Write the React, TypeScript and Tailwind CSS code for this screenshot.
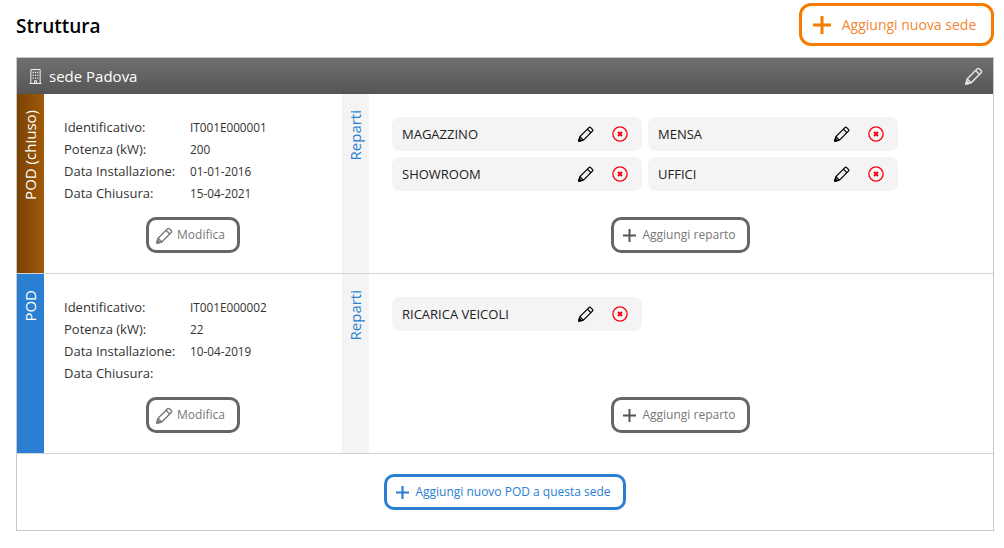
type PodInfo = {
  label: string
  stripClass: string
  id: string
  power: string
  installed: string
  closed: string
  departments: string[]
}

const pods: PodInfo[] = [
  {
    label: 'POD (chiuso)',
    stripClass: 'bg-gradient-to-r from-[#7a4203] to-[#a05a0c]',
    id: 'IT001E000001',
    power: '200',
    installed: '01-01-2016',
    closed: '15-04-2021',
    departments: ['MAGAZZINO', 'MENSA', 'SHOWROOM', 'UFFICI'],
  },
  {
    label: 'POD',
    stripClass: 'bg-[#2a7fd2]',
    id: 'IT001E000002',
    power: '22',
    installed: '10-04-2019',
    closed: '',
    departments: ['RICARICA VEICOLI'],
  },
]

function PlusIcon({ className, strokeWidth }: { className: string; strokeWidth: number }) {
  return (
    <svg viewBox="0 0 12 12" fill="none" stroke="currentColor" strokeWidth={strokeWidth} className={className}>
      <path d="M6 0v12M0 6h12" />
    </svg>
  )
}

function PencilIcon({ className }: { className: string }) {
  return (
    <svg viewBox="0 0 16 16" fill="none" stroke="currentColor" strokeWidth="1.3" strokeLinejoin="round" className={className}>
      <path d="M.8 15.2l1.1-4.6L10.9 1.6a1.2 1.2 0 0 1 1.7 0l1.8 1.8a1.2 1.2 0 0 1 0 1.7L5.4 14.1z" />
      <path d="M9.4 3.1l3.5 3.5M1.9 10.6l3.5 3.5" />
      <path d="M.8 15.2l.6-2.7 2.1 2.1z" fill="currentColor" />
    </svg>
  )
}

function BuildingIcon() {
  return (
    <svg viewBox="0 0 14 16" fill="none" stroke="currentColor" strokeWidth="1" className="h-[15px] w-[13px] text-white">
      <path d="M2 15.5V.5h10v15M.5 15.5h13" />
      <path d="M4.5 3v1.5M7 3v1.5M9.5 3v1.5M4.5 6v1.5M7 6v1.5M9.5 6v1.5M4.5 9v1.5M7 9v1.5M9.5 9v1.5" strokeWidth="1.2" />
      <path d="M6 15.5v-3h2v3" />
    </svg>
  )
}

function RemoveIcon() {
  return (
    <svg viewBox="0 0 16 16" fill="none" stroke="#f5000f" className="h-4 w-4">
      <circle cx="8" cy="8" r="7.1" strokeWidth="1.3" />
      <path d="M6 6l4 4M10 6l-4 4" strokeWidth="1.9" />
    </svg>
  )
}

function InfoRow({ label, value }: { label: string; value: string }) {
  return (
    <div className="flex h-[22px] items-center">
      <span className="w-[126px] text-[13px] text-[#333]">{label}</span>
      <span className="text-[11.75px] text-[#333]">{value}</span>
    </div>
  )
}

function GrayButton({ children, className }: { children: React.ReactNode; className: string }) {
  return (
    <button className={`flex h-[36px] items-center justify-center rounded-[10px] border-[3px] border-[#666] bg-white text-[12px] text-[#777] ${className}`}>
      {children}
    </button>
  )
}

function DepartmentChip({ name }: { name: string }) {
  return (
    <div className="flex h-[34px] w-[250px] items-center rounded-[8px] bg-[#f4f4f4] pl-[10px] pr-[14px]">
      <span className="mt-[2px] flex-1 text-[13px] text-[#222]">{name}</span>
      <PencilIcon className="mr-[18px] h-[16px] w-[16px] text-black" />
      <RemoveIcon />
    </div>
  )
}

function PodRow({ pod }: { pod: PodInfo }) {
  return (
    <div className="flex h-[180px] border-b border-[#d2d2d2]">
      {/* striscia laterale */}
      <div className={`flex w-[27px] shrink-0 justify-center ${pod.stripClass}`}>
        <span className="mt-[16px] h-fit rotate-180 text-[15px] leading-[27px] text-white [writing-mode:vertical-rl]">{pod.label}</span>
      </div>

      <div className="flex w-[298px] shrink-0 flex-col pl-[20px] pt-[23px]">
        <InfoRow label="Identificativo:" value={pod.id} />
        <InfoRow label="Potenza (kW):" value={pod.power} />
        <InfoRow label="Data Installazione:" value={pod.installed} />
        <InfoRow label="Data Chiusura:" value={pod.closed} />
        <GrayButton className="ml-[82px] mt-[12px] w-[94px] gap-[4px] pr-[2px]">
          <PencilIcon className="ml-[-3px] h-[17px] w-[17px] text-[#777]" />
          Modifica
        </GrayButton>
      </div>

      <div className="flex w-[27px] shrink-0 justify-center bg-[#f4f4f4]">
        <span className="mt-[16px] h-fit rotate-180 text-[15px] leading-[27px] text-[#2a7fd2] [writing-mode:vertical-rl]">Reparti</span>
      </div>

      <div className="flex flex-1 flex-col pl-[23px] pt-[23px]">
        <div className="grid h-[74px] grid-cols-[250px_250px] content-start gap-[6px]">
          {pod.departments.map(name => (
            <DepartmentChip key={name} name={name} />
          ))}
        </div>
        <GrayButton className="ml-[219px] mt-[26px] w-[139px] gap-[6px] pr-[2px]">
          <PlusIcon className="h-[13px] w-[13px] text-[#555]" strokeWidth={1.8} />
          Aggiungi reparto
        </GrayButton>
      </div>
    </div>
  )
}

export default function App() {
  return (
    <div className="h-[548px] w-[1004px] overflow-hidden bg-white px-[16px] pt-[3px] pr-[10px] font-['Open_Sans',sans-serif]">
      <div className="mb-[11px] flex h-[43px] items-center justify-between">
        <h1 className="mt-[3px] text-[19px] font-semibold text-black">Struttura</h1>
        <button className="flex h-[43px] w-[195px] items-center justify-center gap-[11px] rounded-[12px] border-[3px] border-[#f57c00] bg-white pr-[4px] text-[14px] text-[#f58634]">
          <PlusIcon className="h-[18px] w-[18px] text-[#f57c00]" strokeWidth={2} />
          Aggiungi nuova sede
        </button>
      </div>

      <div className="h-[474px] border border-[#c8c8c8]">
        <div className="flex h-[36px] items-center justify-between bg-gradient-to-b from-[#707070] to-[#555] pl-[12px] pr-[10px]">
          <div className="flex items-center gap-[7px]">
            <BuildingIcon />
            <span className="text-[15px] text-white">sede Padova</span>
          </div>
          <PencilIcon className="h-[18px] w-[18px] text-[#e4e4e4]" />
        </div>

        {pods.map(pod => (
          <PodRow key={pod.id} pod={pod} />
        ))}

        <div className="flex h-[76px] items-start justify-center pt-[20px]">
          <button className="-ml-[1px] flex h-[36px] w-[242px] items-center justify-center gap-[6px] rounded-[10px] border-[3px] border-[#2a7fd2] bg-white pr-[2px] text-[12px] text-[#2a7fd2]">
            <PlusIcon className="h-[13px] w-[13px]" strokeWidth={2} />
            Aggiungi nuovo POD a questa sede
          </button>
        </div>
      </div>
    </div>
  )
}
